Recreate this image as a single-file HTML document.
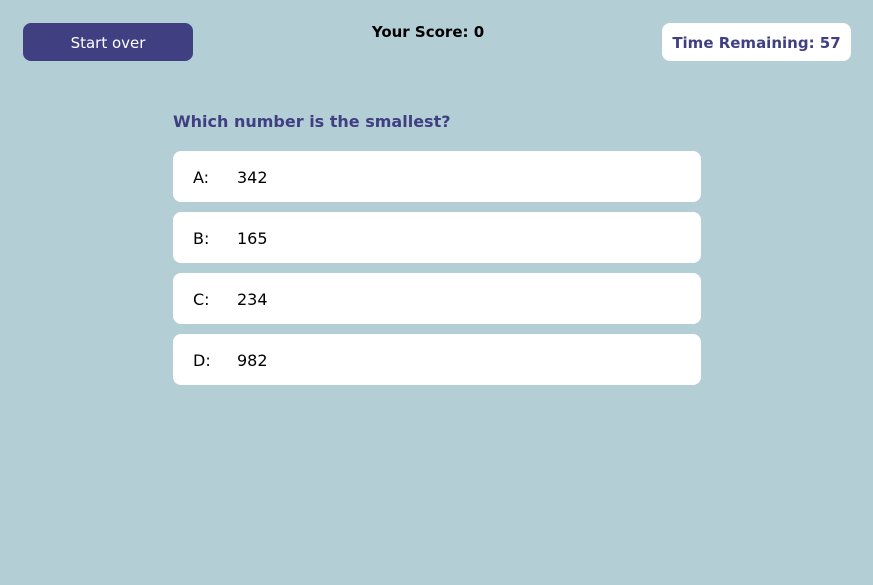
<!DOCTYPE html>
<html><head><meta charset="utf-8"><style>
body{margin:0;width:873px;height:585px;background:#b4ced5;font-family:"DejaVu Sans","Liberation Sans",sans-serif;position:relative;overflow:hidden}
.btn{position:absolute;left:23px;top:23px;width:170px;height:38px;background:#3f3f82;border-radius:8px;color:#fff;font-size:15px;line-height:40px;text-align:center}
.score{position:absolute;left:0;width:856px;top:23px;text-align:center;font-weight:bold;font-size:15px;color:#000}
.time{position:absolute;left:662px;top:23px;width:189px;height:38px;background:#fff;border-radius:8px;color:#3f3f82;font-weight:bold;font-size:15px;line-height:40px;text-align:center}
.q{position:absolute;left:173px;top:112px;font-size:16px;font-weight:bold;color:#3f3f82}
.opt{position:absolute;left:173px;width:528px;height:51px;background:#fff;border-radius:8px;font-size:16px;line-height:53px;color:#000}
.opt .l{position:absolute;left:20px}
.opt .v{position:absolute;left:64px}
</style></head><body>
<div class="btn">Start over</div>
<div class="score">Your Score: 0</div>
<div class="time">Time Remaining: 57</div>
<div class="q">Which number is the smallest?</div>
<div class="opt" style="top:151px"><span class="l">A:</span><span class="v">342</span></div>
<div class="opt" style="top:212px"><span class="l">B:</span><span class="v">165</span></div>
<div class="opt" style="top:273px"><span class="l">C:</span><span class="v">234</span></div>
<div class="opt" style="top:334px"><span class="l">D:</span><span class="v">982</span></div>
</body></html>
